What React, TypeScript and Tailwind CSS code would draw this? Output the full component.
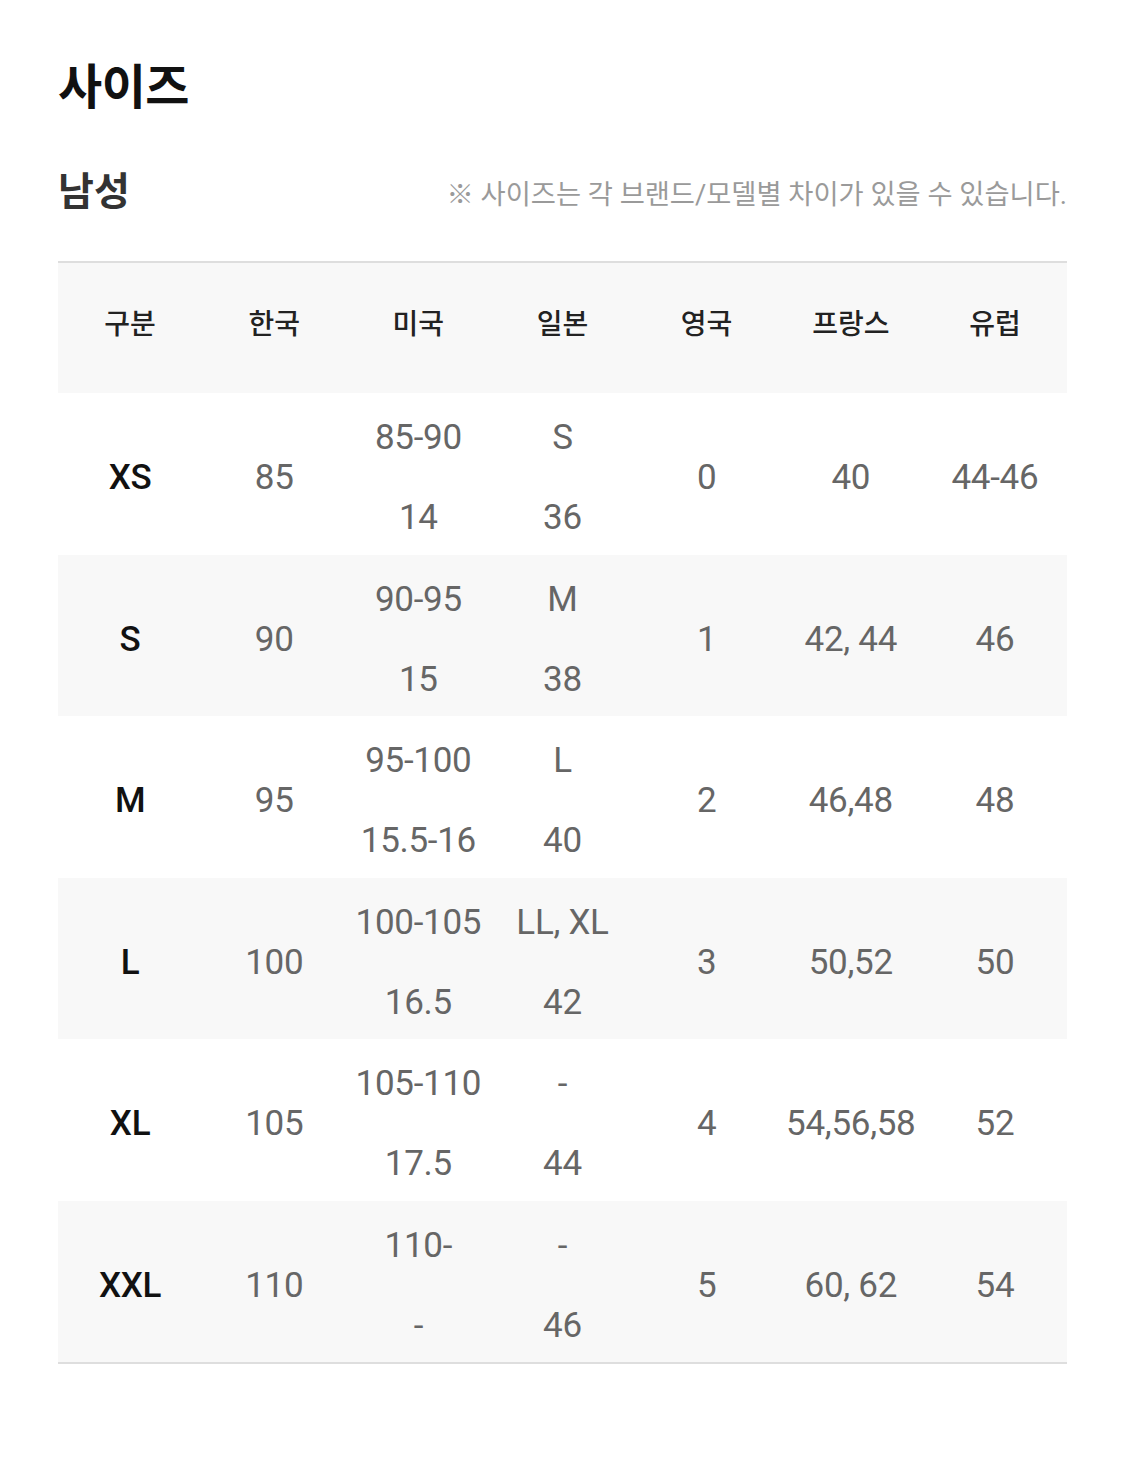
import React from "react";

const font = { fontFamily: '"Roboto", "Noto Sans CJK KR", sans-serif' };

type Cell = string | string[];
const headers = ["구분", "한국", "미국", "일본", "영국", "프랑스", "유럽"];
const rows: Cell[][] = [
  ["XS", "85", ["85-90", "14"], ["S", "36"], "0", "40", "44-46"],
  ["S", "90", ["90-95", "15"], ["M", "38"], "1", "42, 44", "46"],
  ["M", "95", ["95-100", "15.5-16"], ["L", "40"], "2", "46,48", "48"],
  ["L", "100", ["100-105", "16.5"], ["LL, XL", "42"], "3", "50,52", "50"],
  ["XL", "105", ["105-110", "17.5"], ["-", "44"], "4", "54,56,58", "52"],
  ["XXL", "110", ["110-", "-"], ["-", "46"], "5", "60, 62", "54"],
];

export default function App() {
  return (
    <div className="w-[1125px] min-h-[1470px] bg-white" style={font}>
      <div className="px-[58px] pt-[60px]">
        <h1 className="h-[56px] text-[48px] leading-[56px] font-bold text-[#111] tracking-[-0.5px]">사이즈</h1>
        <div className="mt-[52px] flex h-[48px] items-center justify-between">
          <h2 className="text-[39px] leading-[48px] font-bold text-[#333]">남성</h2>
          <p className="mt-[6px] text-[27.3px] leading-[48px] text-[#9a9a9a]">※ 사이즈는 각 브랜드/모델별 차이가 있을 수 있습니다.</p>
        </div>
        <div className="mt-[45px] w-[1009px] border-t-2 border-b-2 border-[#dedede]">
          <div className="grid h-[130px] grid-cols-7 items-center bg-[#f8f8f8] pb-[6px]">
            {headers.map((h) => (
              <div key={h} className="text-center text-[28px] font-medium text-[#222]">{h}</div>
            ))}
          </div>
          {rows.map((r, i) => (
            <div key={i} className={`grid h-[161.5px] grid-cols-7 items-center pt-[5px] ${i % 2 === 1 ? "bg-[#f8f8f8]" : "bg-white"}`}>
              {r.map((c, j) => (
                <div key={j} className={`flex flex-col items-center justify-center text-[35px] ${j === 0 ? "font-medium text-[#111]" : "text-[#666]"}`}>
                  {Array.isArray(c) ? (
                    c.map((l, k) => (
                      <span key={k} className="leading-[80px] tracking-[-0.3px]">{l}</span>
                    ))
                  ) : (
                    <span className="leading-[80px] tracking-[-0.3px]">{c}</span>
                  )}
                </div>
              ))}
            </div>
          ))}
        </div>
      </div>
    </div>
  );
}
